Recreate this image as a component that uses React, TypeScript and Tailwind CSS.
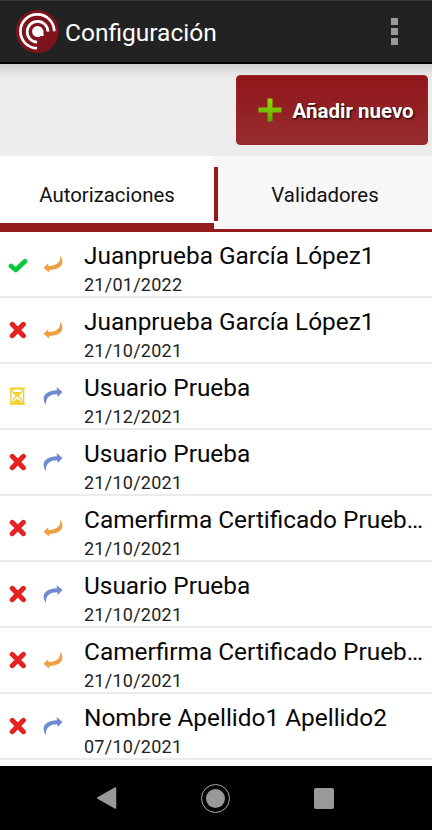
import React from "react";

type Status = "ok" | "error" | "pending";
type Direction = "in" | "out";

interface Entry {
  name: string;
  date: string;
  status: Status;
  direction: Direction;
}

const entries: Entry[] = [
  { name: "Juanprueba García López1", date: "21/01/2022", status: "ok", direction: "in" },
  { name: "Juanprueba García López1", date: "21/10/2021", status: "error", direction: "in" },
  { name: "Usuario Prueba", date: "21/12/2021", status: "pending", direction: "out" },
  { name: "Usuario Prueba", date: "21/10/2021", status: "error", direction: "out" },
  { name: "Camerfirma Certificado Prueb…", date: "21/10/2021", status: "error", direction: "in" },
  { name: "Usuario Prueba", date: "21/10/2021", status: "error", direction: "out" },
  { name: "Camerfirma Certificado Prueb…", date: "21/10/2021", status: "error", direction: "in" },
  { name: "Nombre Apellido1 Apellido2", date: "07/10/2021", status: "error", direction: "out" },
];

function Logo() {
  return (
    <svg width="44" height="44" viewBox="0 0 44 44" className="shrink-0">
      <circle cx="22.300" cy="21.500" r="21.500" fill="#7d131b" />
      <g fill="none" stroke="#fff" strokeWidth="2.700">
        <path d="M22 38.200A16.900 16.900 0 1 1 39.200 21.300" />
        <path d="M22 32.200A10.400 10.400 0 1 1 33 21.600" />
      </g>
      <circle cx="22.600" cy="21.500" r="5.500" fill="#fff" />
      <path d="M23 20.500h5.500v5.500h-5.500z" fill="#fff" />
    </svg>
  );
}

function StatusIcon({ status }: { status: Status }) {
  if (status === "ok") {
    return (
      <svg width="20" height="18" viewBox="0 0 20 18" className="shrink-0">
        <path d="M3 11l4.800 4L17 6.200" fill="none" stroke="#0bc93c" strokeWidth="4.700" strokeLinecap="round" strokeLinejoin="round" />
      </svg>
    );
  }
  if (status === "error") {
    return (
      <svg width="20" height="18" viewBox="0 0 20 18" className="shrink-0">
        <path d="M4.200 3.300l11.200 11.400M15.400 3.300L4.200 14.700" fill="none" stroke="#e52222" strokeWidth="5" strokeLinecap="round" />
      </svg>
    );
  }
  return (
    <svg width="20" height="18" viewBox="0 0 20 18" className="shrink-0">
      <g fill="none" stroke="#f2cd1c">
        <path d="M1.800 1.500h15M1.800 16.700h15" strokeWidth="1.900" />
        <path d="M3 1.500v15M15.600 1.500v15" strokeWidth="1.400" />
        <path d="M4.500 2.500C4.500 7 8 7.500 8.500 9C8 10.500 4.500 11 4.500 15.500M14 2.500C14 7 10.500 7.500 10 9C10.500 10.500 14 11 14 15.500" strokeWidth="1.200" />
      </g>
      <path d="M6 5h6.600L9.300 9zM5 15.800c1-2 3-2.500 4.300-4.300 1.300 1.800 3.300 2.300 4.300 4.300z" fill="#f2cd1c" />
    </svg>
  );
}

function DirectionIcon({ direction }: { direction: Direction }) {
  return direction === "in" ? (
    <svg width="22" height="20" viewBox="0 0 22 20" className="shrink-0">
      <path d="M18 1.500C23.200 8.500 20 15.800 7 16L7.300 18.800 1.500 13.800 6 9.500 6.500 12C14 12 19.300 8.500 18 1.500z" fill="#ed9f42" />
    </svg>
  ) : (
    <svg width="22" height="20" viewBox="0 0 22 20" className="shrink-0">
      <path d="M4 19C-1.800 11 3.500 4.300 15 4.200L14.500 1.100 20.500 6 15.800 11 15.300 8.300C7.500 8.200 3.500 12 4 19z" fill="#6f8ad2" />
    </svg>
  );
}

function Row({ entry }: { entry: Entry }) {
  return (
    <li className="flex h-[66px] border-b-2 border-[#ebebeb]">
      <div className="flex w-[84px] items-center pl-[7.5px]">
        <StatusIcon status={entry.status} />
        <div className="pl-[14.5px]">
          <DirectionIcon direction={entry.direction} />
        </div>
      </div>
      <div className="flex flex-col whitespace-nowrap pt-[10px]">
        <span className="text-[24.4px] leading-[28px] text-[#080808]">{entry.name}</span>
        <span className="mt-px text-[18px] leading-[28px] tracking-[0.25px] text-[#222]">{entry.date}</span>
      </div>
    </li>
  );
}

export default function App() {
  return (
    <div className="flex h-[830px] w-[432px] flex-col overflow-hidden bg-white font-['Roboto',sans-serif]">
      <header className="flex h-16 shrink-0 items-center justify-between border-b-2 border-t border-b-black border-t-[#3a3a3a] bg-[#222] pl-[15px] pr-[34px]">
        <div className="flex items-center gap-[6px]">
          <Logo />
          <h1 className="pt-[2px] text-[24.5px] leading-[28px] text-white">Configuración</h1>
        </div>
        <div className="flex flex-col gap-[3px]">
          <span className="h-[7px] w-[7px] bg-[#999]" />
          <span className="h-[7px] w-[7px] bg-[#999]" />
          <span className="h-[7px] w-[7px] bg-[#999]" />
        </div>
      </header>

      <div className="flex h-[92px] shrink-0 justify-end bg-[#ededed] bg-[linear-gradient(#cdcdcd,#dedede_6px,#ededed_15px)] pr-1 pt-[11px]">
        <button className="flex h-[70px] w-[192px] items-center rounded-[4px] border border-[#9c2428] bg-[linear-gradient(#901519,#972d2f)] pl-[21px]">
          <svg width="24" height="24" viewBox="0 0 24 24" className="shrink-0">
            <defs>
              <linearGradient id="plus" x1="0" y1="0" x2="0" y2="1">
                <stop offset="0" stopColor="#8fe000" />
                <stop offset="1" stopColor="#62a300" />
              </linearGradient>
            </defs>
            <path d="M9.500 0.500h5v9h9v5h-9v9h-5v-9h-9v-5h9z" fill="url(#plus)" />
          </svg>
          <span className="pl-[10.5px] pt-[2px] text-[20.5px] font-bold leading-6 text-white [text-shadow:1px_1px_2px_#000]">Añadir nuevo</span>
        </button>
      </div>

      <nav className="flex h-[76px] shrink-0 text-[20.4px] leading-6 text-[#111]">
        <div className="flex w-[214px] items-center justify-center border-b-[9px] border-[#941a1e] bg-white pt-[10px]">Autorizaciones</div>
        <div className="flex flex-1 border-b-[3px] border-[#941a1e] bg-[#f7f7f7]">
          <div className="mt-[11px] h-[54px] w-1 bg-[#941a1e]" />
          <div className="flex flex-1 items-center justify-center pt-[4px]">Validadores</div>
        </div>
      </nav>

      <ul className="h-[534px] shrink-0">
        {entries.map((entry, i) => (
          <Row key={i} entry={entry} />
        ))}
      </ul>

      <footer className="flex h-16 shrink-0 items-center bg-black pl-[96px]">
        <svg width="22" height="24" viewBox="0 0 22 24" className="shrink-0">
          <path d="M1.800 12L19.500 2v20z" fill="#999" stroke="#999" strokeWidth="1.500" strokeLinejoin="round" />
        </svg>
        <div className="ml-[83px] flex h-[29px] w-[29px] shrink-0 items-center justify-center rounded-full border-[1.5px] border-[#aaa]">
          <span className="h-[19px] w-[19px] rounded-full bg-[#999]" />
        </div>
        <span className="ml-[84px] h-[21px] w-[20px] rounded-[2px] bg-[#999]" />
      </footer>
    </div>
  );
}
